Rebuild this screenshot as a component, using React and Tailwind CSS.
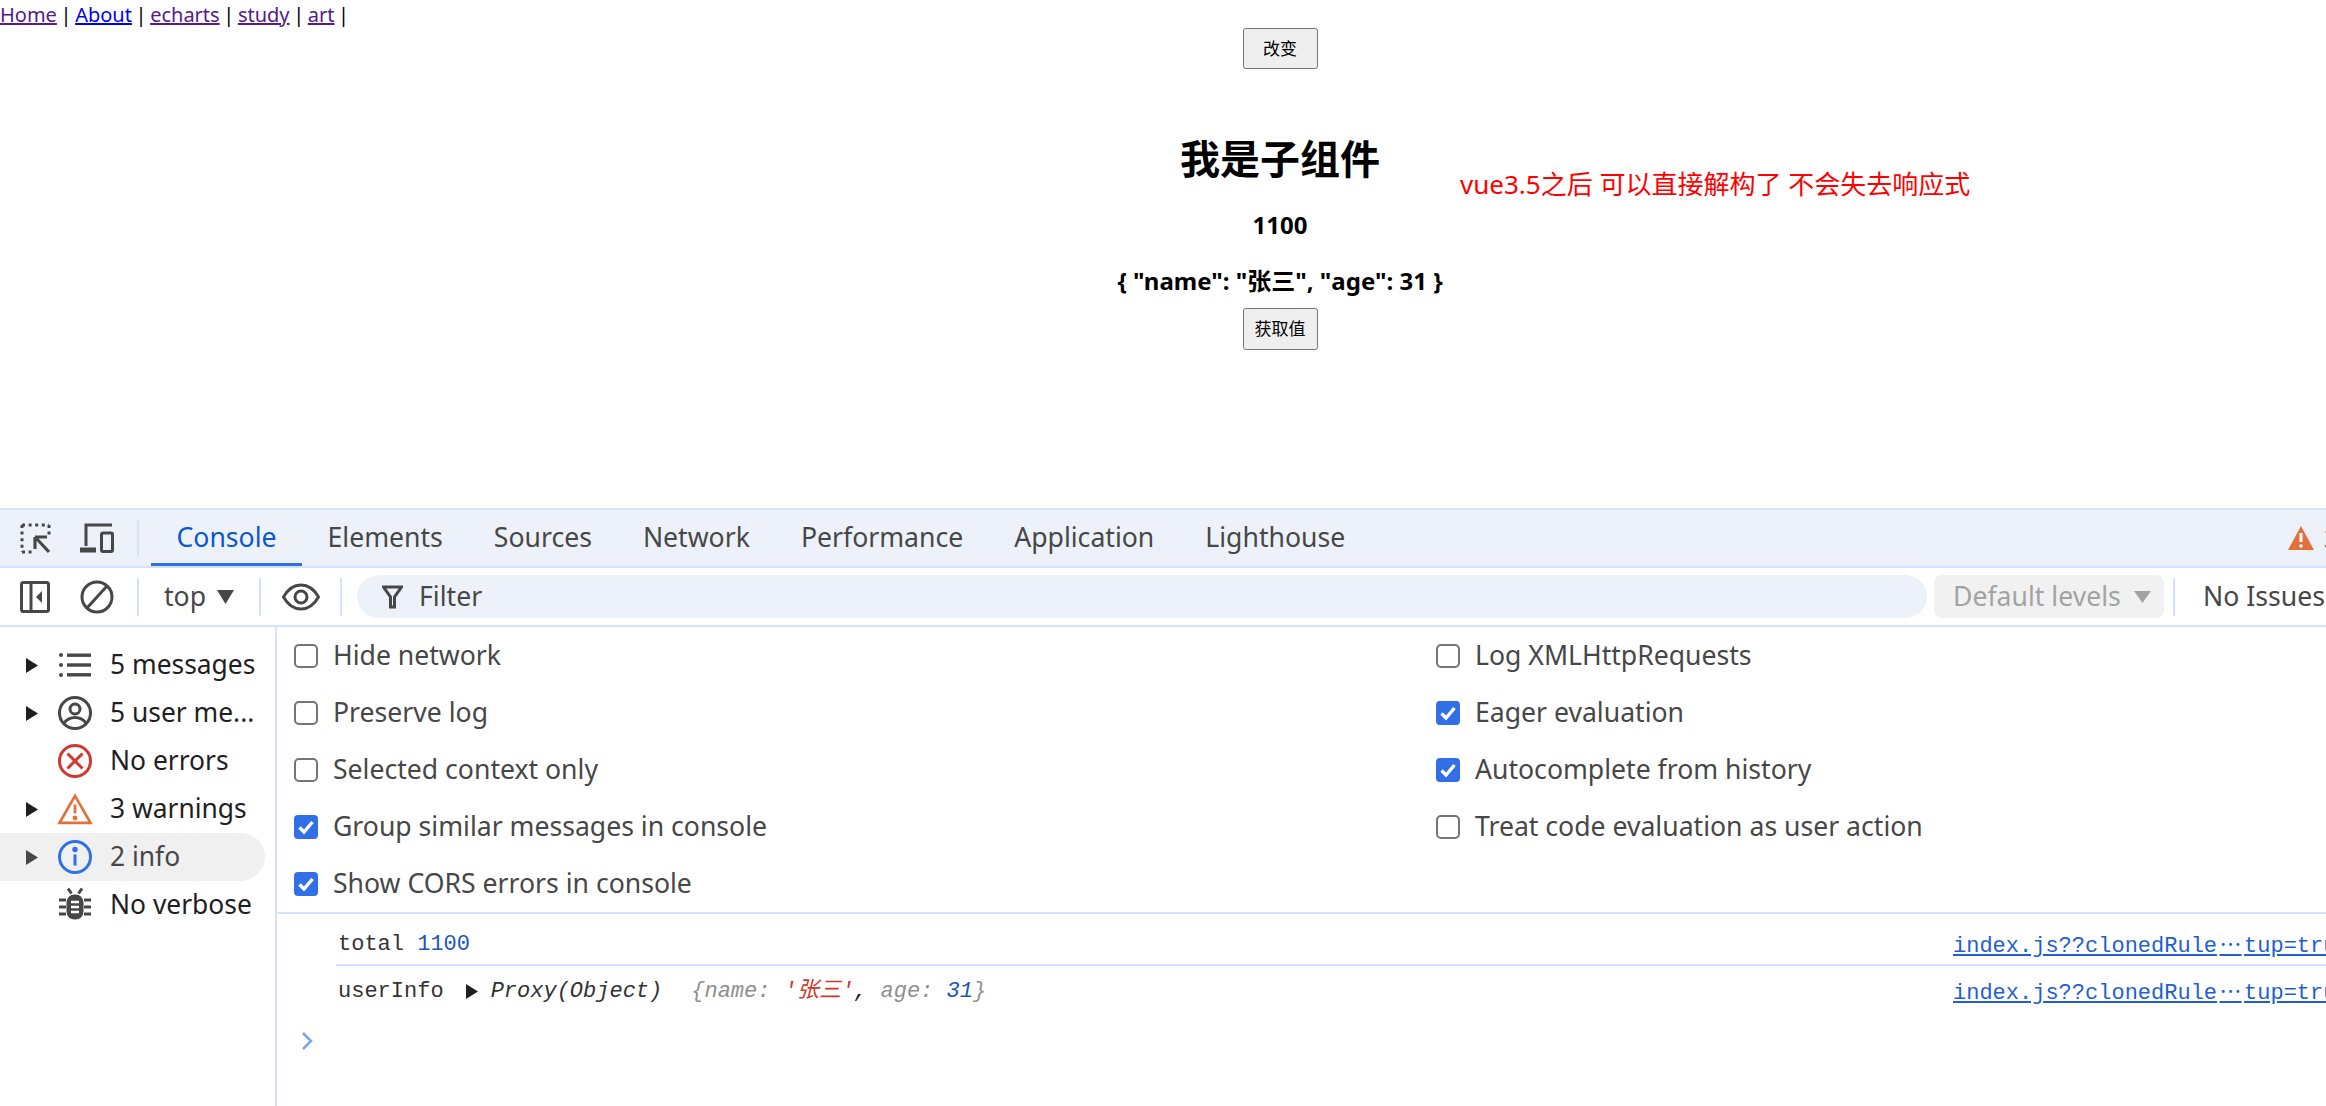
import React from "react";

const uiFont = "font-['Noto_Sans','Noto_Sans_CJK_SC',sans-serif]";
const monoFont = "font-['Liberation_Mono','Noto_Sans_CJK_SC',monospace]";

const tabs = ["Console", "Elements", "Sources", "Network", "Performance", "Application", "Lighthouse"];

const filters = [
    { label: "5 messages", icon: "list", arrow: true },
    { label: "5 user me...", icon: "user", arrow: true },
    { label: "No errors", icon: "error" },
    { label: "3 warnings", icon: "warning", arrow: true },
    { label: "2 info", icon: "info", arrow: true, active: true },
    { label: "No verbose", icon: "bug" },
];

const leftOptions = [
    { label: "Hide network" },
    { label: "Preserve log" },
    { label: "Selected context only" },
    { label: "Group similar messages in console", checked: true },
    { label: "Show CORS errors in console", checked: true },
];

const rightOptions = [
    { label: "Log XMLHttpRequests" },
    { label: "Eager evaluation", checked: true },
    { label: "Autocomplete from history", checked: true },
    { label: "Treat code evaluation as user action" },
];

function FilterIcon({ name }) {
    if (name === "list") {
        return (
            <svg width="36" height="36" viewBox="0 0 36 36" fill="#474747">
                <circle cx="4" cy="8" r="2" />
                <circle cx="4" cy="18" r="2" />
                <circle cx="4" cy="28" r="2" />
                <rect x="10" y="6.5" width="24" height="3.4" />
                <rect x="10" y="16.3" width="24" height="3.4" />
                <rect x="10" y="26.1" width="24" height="3.4" />
            </svg>
        );
    }
    if (name === "user") {
        return (
            <svg width="36" height="36" viewBox="0 0 36 36" fill="none" stroke="#474747" strokeWidth="3">
                <circle cx="18" cy="18" r="15.5" />
                <circle cx="18" cy="14" r="5" />
                <path d="M7 28c3-4 7-5.5 11-5.5S26 24 29 28" />
            </svg>
        );
    }
    if (name === "error") {
        return (
            <svg width="36" height="36" viewBox="0 0 36 36" fill="none" stroke="#d0392e" strokeWidth="3">
                <circle cx="18" cy="18" r="15.5" />
                <path d="M10.5 10.5l15 15M25.5 10.5l-15 15" />
            </svg>
        );
    }
    if (name === "warning") {
        return (
            <svg width="40" height="36" viewBox="0 0 40 36" fill="none" stroke="#e2703a" strokeWidth="3">
                <path d="M20 3.5L2.8 33.5h34.4z" />
                <path d="M20 13v10" />
                <circle cx="20" cy="28" r="1.2" fill="#e2703a" />
            </svg>
        );
    }
    if (name === "info") {
        return (
            <svg width="36" height="36" viewBox="0 0 36 36" fill="none" stroke="#2f6fe8" strokeWidth="3">
                <circle cx="18" cy="18" r="15.5" />
                <path d="M18 15.5v11" />
                <circle cx="18" cy="10.5" r="1.2" fill="#2f6fe8" />
            </svg>
        );
    }
    return (
        <svg width="36" height="36" viewBox="0 0 36 36" fill="none" stroke="#474747" strokeWidth="3">
            <path d="M11 1.5l3.5 5M25 1.5l-3.5 5" />
            <rect x="9.5" y="7.5" width="17" height="25" rx="8" fill="#474747" stroke="none" />
            <path d="M2 13h7M2 20h7M2 27h7M27 13h7M27 20h7M27 27h7" />
            <path d="M14 15h8M14 20h8M14 25h8" stroke="#fff" strokeWidth="2.4" />
        </svg>
    );
}

function Triangle({ className }) {
    return (
        <svg width="12" height="15" viewBox="0 0 12 15" className={className} fill="currentColor">
            <path d="M0 0l12 7.5L0 15z" />
        </svg>
    );
}

function Option({ label, checked }) {
    return (
        <div className="flex h-[57px] items-center">
            {checked ? (
                <span className="flex h-6 w-6 items-center justify-center rounded-[4px] bg-[#306fe8]">
                    <svg width="18" height="18" viewBox="0 0 18 18" fill="none" stroke="#fff" strokeWidth="3.4">
                        <path d="M2.5 9.5l4.5 4.5 8.5-10" />
                    </svg>
                </span>
            ) : (
                <span className="h-6 w-6 rounded-[5px] border-2 border-[#757575] bg-white" />
            )}
            <span className="ml-[15px] whitespace-nowrap">{label}</span>
        </div>
    );
}

function Divider({ className }) {
    return <div className={`h-[38px] w-[2px] bg-[#d3e3fd] ${className}`} />;
}

function SourceLink() {
    return (
        <a href="#" className="ml-auto w-[373px] shrink-0 overflow-hidden text-[#1f5fd0] underline">
            index.js??clonedRule<span className="inline-block w-[27px] text-center font-['Noto_Sans_CJK_SC'] underline">⋯</span>tup=true
        </a>
    );
}

export default function App() {
    return (
        <div className={`h-[1106px] w-[2326px] overflow-hidden bg-white ${uiFont}`}>
            <div className="h-[508px]">
                <nav className="h-[28px] text-[20px] leading-[30px] text-black whitespace-nowrap [word-spacing:-1.6px]">
                    <a href="#" className="text-[#551a8b] underline">Home</a> | <a href="#" className="text-[#0000ee] underline">About</a> | <a href="#" className="text-[#551a8b] underline">echarts</a> | <a href="#" className="text-[#551a8b] underline">study</a> | <a href="#" className="text-[#551a8b] underline">art</a> |
                </nav>
                <div className="flex pl-[1116px]">
                    <div className="flex w-[328px] flex-col items-center text-black">
                        <button className="h-[41px] w-[75px] rounded-[3px] border-[1.5px] border-[#767676] bg-[#efefef] text-[17px]">改变</button>
                        <h1 className="mt-[60px] text-[40px] leading-[60px] font-bold whitespace-nowrap">我是子组件</h1>
                        <p className="mt-[18px] text-[24px] leading-[36px] font-bold whitespace-nowrap">1100</p>
                        <p className="mt-[20px] text-[24px] leading-[36px] font-bold whitespace-nowrap">{'{ "name": "张三", "age": 31 }'}</p>
                        <button className="mt-[9px] h-[42px] w-[75px] rounded-[3px] border-[1.5px] border-[#767676] bg-[#efefef] text-[17px]">获取值</button>
                    </div>
                    <p className="ml-[16px] mt-[138px] text-[26px] leading-[36px] whitespace-nowrap text-[#ff0000]">vue3.5之后 可以直接解构了 不会失去响应式</p>
                </div>
            </div>

            <div className="flex h-[60px] items-stretch border-y-2 border-[#d3e3fd] bg-[#edf2fa]">
                <div className="flex w-[137px] shrink-0 items-center pl-[20px]">
                    <svg width="31" height="32" viewBox="0 0 31 32" fill="none" stroke="#474747" strokeWidth="3">
                        <path d="M2 3h27M2 3v27M29 3v12M2 30h12" strokeDasharray="3 3.6" />
                        <path d="M15 15h12M15 15v12M15.5 15.5L29 30" strokeWidth="3.2" />
                    </svg>
                    <svg className="ml-[29px]" width="34" height="32" viewBox="0 0 34 32" fill="none" stroke="#474747" strokeWidth="3">
                        <path d="M6 24V3h26" />
                        <path d="M0 28h16" strokeWidth="5" />
                        <rect x="21.5" y="11" width="11" height="18.5" rx="1.5" />
                    </svg>
                </div>
                <Divider className="my-auto" />
                <div className="flex pl-[12px] text-[26.6px] text-[#474747]">
                    {tabs.map((tab, i) => (
                        <div key={tab} className={`flex items-center border-b-[3px] px-[25.5px] pt-[2px] whitespace-nowrap ${i === 0 ? "border-[#306fe8] text-[#0b57d0]" : "border-transparent"}`}>{tab}</div>
                    ))}
                </div>
                <div className="ml-auto flex w-[38px] shrink-0 items-center">
                    <svg className="shrink-0" width="26" height="24" viewBox="0 0 26 24">
                        <path d="M13 0L0 24h26z" fill="#e2703a" />
                        <path d="M13 7v9" stroke="#fff" strokeWidth="3" />
                        <circle cx="13" cy="20" r="1.8" fill="#fff" />
                    </svg>
                    <span className="ml-[10px] text-[26px] text-[#474747]">3</span>
                </div>
            </div>

            <div className="flex h-[59px] items-center border-b-2 border-[#d3e3fd] text-[26.6px] text-[#474747]">
                <svg className="ml-[20px]" width="30" height="32" viewBox="0 0 30 32" fill="none" stroke="#474747" strokeWidth="3">
                    <rect x="1.5" y="1.5" width="27" height="29" rx="2" />
                    <path d="M11 2v28" />
                    <path d="M22 10v12l-6-6z" fill="#474747" stroke="none" />
                </svg>
                <svg className="ml-[30px]" width="34" height="34" viewBox="0 0 34 34" fill="none" stroke="#474747" strokeWidth="3">
                    <circle cx="17" cy="17" r="15" />
                    <path d="M27 6L7 28" />
                </svg>
                <Divider className="ml-[23px]" />
                <span className="ml-[25px]">top</span>
                <svg className="ml-[11px]" width="17" height="14" viewBox="0 0 17 14" fill="#474747">
                    <path d="M0 0h17L8.5 14z" />
                </svg>
                <Divider className="ml-[25px]" />
                <svg className="ml-[21px]" width="38" height="28" viewBox="0 0 38 28" fill="none" stroke="#474747" strokeWidth="3">
                    <path d="M1.5 14C6 6 12 2 19 2s13 4 17.5 12C32 22 26 26 19 26S6 22 1.5 14z" />
                    <circle cx="19" cy="14" r="6" />
                </svg>
                <Divider className="ml-[20px]" />
                <div className="ml-[15px] flex h-[43px] w-[1570px] shrink-0 items-center rounded-full bg-[#edf2fa] pl-[25px]">
                    <svg width="21" height="24" viewBox="0 0 21 24" fill="none" stroke="#474747" strokeWidth="3">
                        <path d="M1.5 2h18l-7 10v10h-4V12z" />
                    </svg>
                    <span className="ml-[16px]">Filter</span>
                </div>
                <div className="ml-[7px] flex h-[43px] w-[230px] shrink-0 items-center rounded-[8px] bg-[#f1f1f1] pl-[19px] text-[#a3a3a3]">
                    <span className="whitespace-nowrap">Default levels</span>
                    <svg className="ml-[13px]" width="17" height="12" viewBox="0 0 17 12" fill="#a3a3a3">
                        <path d="M0 0h17L8.5 12z" />
                    </svg>
                </div>
                <Divider className="ml-[9px] shrink-0" />
                <span className="ml-[28px] whitespace-nowrap">No Issues</span>
            </div>

            <div className="flex h-[479px]">
                <div className="w-[277px] shrink-0 border-r-2 border-[#d3e3fd] pt-[14px] text-[26.4px] text-[#1f1f1f]">
                    {filters.map((f) => (
                        <div key={f.label} className={`flex h-[48px] w-[265px] items-center rounded-r-full ${f.active ? "bg-[#f0f0f0] text-[#474747]" : ""}`}>
                            <div className="flex w-[57px] shrink-0 justify-center pl-[7px]">
                                {f.arrow && <Triangle className={f.active ? "text-[#474747]" : "text-[#1f1f1f]"} />}
                            </div>
                            <div className="flex w-[36px] shrink-0 justify-center">
                                <FilterIcon name={f.icon} />
                            </div>
                            <span className="ml-[17px] whitespace-nowrap">{f.label}</span>
                        </div>
                    ))}
                </div>
                <div className="min-w-0 flex-1">
                    <div className="flex h-[287px] border-b-2 border-[#d3e3fd] pl-[17px] text-[26.6px] text-[#474747]">
                        <div className="w-[1142px] shrink-0">
                            {leftOptions.map((o) => <Option key={o.label} {...o} />)}
                        </div>
                        <div>
                            {rightOptions.map((o) => <Option key={o.label} {...o} />)}
                        </div>
                    </div>
                    <div className={`pl-[59px] text-[22px] ${monoFont}`}>
                        <div className="flex h-[52px] items-center justify-between border-b-2 border-[#d3e3fd] pt-[11px] pl-[2px] text-[#333333] whitespace-nowrap">
                            <span>total <span className="text-[#1a56b8]">1100</span></span>
                            <SourceLink />
                        </div>
                        <div className="flex h-[50px] items-center pl-[2px] text-[#333333] whitespace-nowrap">
                            <span>userInfo</span>
                            <Triangle className="ml-[22px] text-[#1f1f1f]" />
                            <span className="ml-[13px] italic">Proxy(Object)</span>
                            <span className="ml-[29px] italic text-[#8f8f8f]">{"{"}name: <span className="text-[#d0392e]">'张三'</span><span className="text-[#1f1f1f]">,</span> age: <span className="text-[#1a56b8]">31</span>{"}"}</span>
                            <SourceLink />
                        </div>
                    </div>
                    <div className="pl-[24px] pt-[16px]">
                        <svg width="12" height="18" viewBox="0 0 12 18" fill="none" stroke="#7ba4ee" strokeWidth="2.5">
                            <path d="M2 1l8 8-8 8" />
                        </svg>
                    </div>
                </div>
            </div>
        </div>
    );
}
